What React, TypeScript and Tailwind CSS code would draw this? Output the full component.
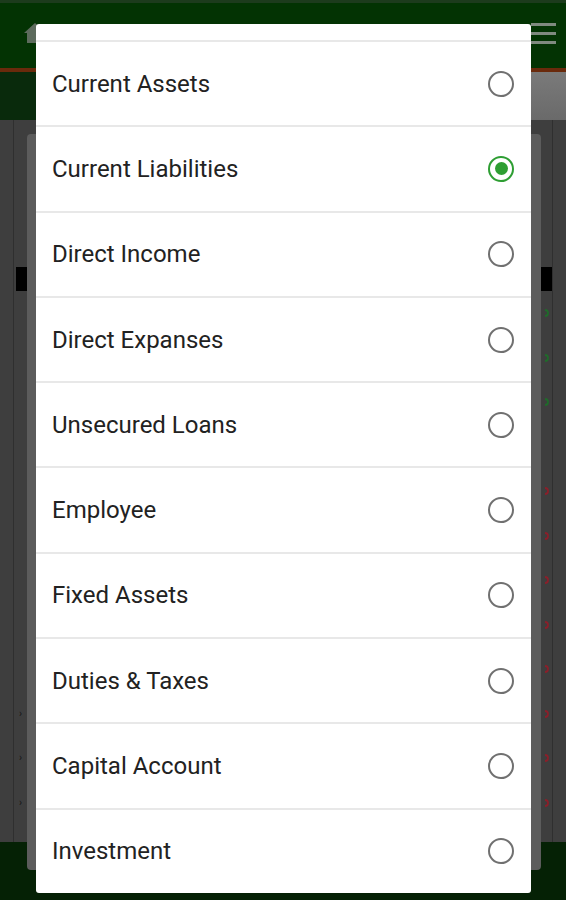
import React from "react";

const items = [
  "Current Assets",
  "Current Liabilities",
  "Direct Income",
  "Direct Expanses",
  "Unsecured Loans",
  "Employee",
  "Fixed Assets",
  "Duties & Taxes",
  "Capital Account",
  "Investment",
];

const rightMarks: (string | null)[] = [
  "#1f6b2a",
  "#1f6b2a",
  "#1f6b2a",
  null,
  "#8a1f2a",
  "#8a1f2a",
  "#8a1f2a",
  "#8a1f2a",
  "#8a1f2a",
  "#8a1f2a",
  "#8a1f2a",
  "#8a1f2a",
];

function Mark({ color }: { color: string }) {
  return (
    <svg width="8" height="10" viewBox="0 0 8 10">
      <path d="M2 2 A3 3 0 1 1 2 8" fill="none" stroke={color} strokeWidth="1.8" />
    </svg>
  );
}

function Radio({ checked }: { checked: boolean }) {
  if (checked) {
    return (
      <div className="w-[26px] h-[26px] rounded-full border-[2.5px] border-[#2e9e33] flex items-center justify-center">
        <div className="w-[13px] h-[13px] rounded-full bg-[#2e9e33]" />
      </div>
    );
  }
  return <div className="w-[26px] h-[26px] rounded-full border-2 border-[#707070]" />;
}

export default function App() {
  return (
    <div
      className="relative w-[566px] h-[900px] overflow-hidden flex flex-col"
      style={{ fontFamily: "Roboto, 'Noto Sans', sans-serif" }}
    >
      {/* background app (dimmed) */}
      <div className="h-[3px] bg-[#1d3b1d]" />
      <div className="h-[65px] bg-[#033303] flex items-center justify-between pl-[22px] pr-[10px]">
        <svg width="26" height="24" viewBox="0 0 26 24" className="-mt-[6px]">
          <path d="M13 2 L2 12 H5 V22 H21 V12 H24 Z" fill="#5d6b5d" />
        </svg>
        <div className="flex flex-col gap-[6px] -mt-[4px]">
          <div className="w-[25px] h-[3px] bg-[#7f8a7f]" />
          <div className="w-[25px] h-[3px] bg-[#7f8a7f]" />
          <div className="w-[25px] h-[3px] bg-[#7f8a7f]" />
        </div>
      </div>
      <div className="h-[4px] bg-[#6a2a0c]" />
      <div className="h-[48px] flex">
        <div className="flex-1 bg-[#092a0c]" />
        <div className="w-[35px] bg-gradient-to-b from-[#7a7a7a] to-[#6a6a6a]" />
      </div>
      <div className="flex-1 bg-[#3e3e3e] flex pl-[13px] pr-[13px]">
        <div className="w-[14px] border-l border-[#2f2f2f] flex flex-col pt-[147px]">
          <div className="h-[24px] bg-black ml-[2px]" />
          {rightMarks.map((_, i) => (
            <div key={i} className="h-[44.5px] flex items-center justify-center text-[10px] text-[#151515] leading-none">
              {i >= 9 ? "›" : ""}
            </div>
          ))}
        </div>
        <div className="flex-1" />
        <div className="w-[12px] border-r border-[#2f2f2f] flex flex-col pt-[147px]">
          <div className="h-[24px] bg-black" />
          {rightMarks.map((c, i) => (
            <div key={i} className="h-[44.5px] flex items-center pl-[2px]">
              {c ? <Mark color={c} /> : null}
            </div>
          ))}
        </div>
      </div>
      <div className="h-[58px] bg-[#052105]" />

      {/* behind dialog */}
      <div className="absolute left-[27px] top-[134px] w-[514px] h-[736px] bg-[#5c5c5c] rounded-[4px]" />

      {/* front dialog */}
      <div className="absolute left-[36px] top-[24px] w-[495px] h-[869px] bg-white rounded-[3px] pt-[16px] flex flex-col">
        {items.map((label, i) => (
          <div
            key={label}
            className="h-[85.3px] border-t-2 border-[#e8e8e8] flex items-center justify-between pl-[16px] pr-[17px]"
          >
            <span className="text-[24px] text-[#222222] leading-none">{label}</span>
            <Radio checked={i === 1} />
          </div>
        ))}
      </div>
    </div>
  );
}
